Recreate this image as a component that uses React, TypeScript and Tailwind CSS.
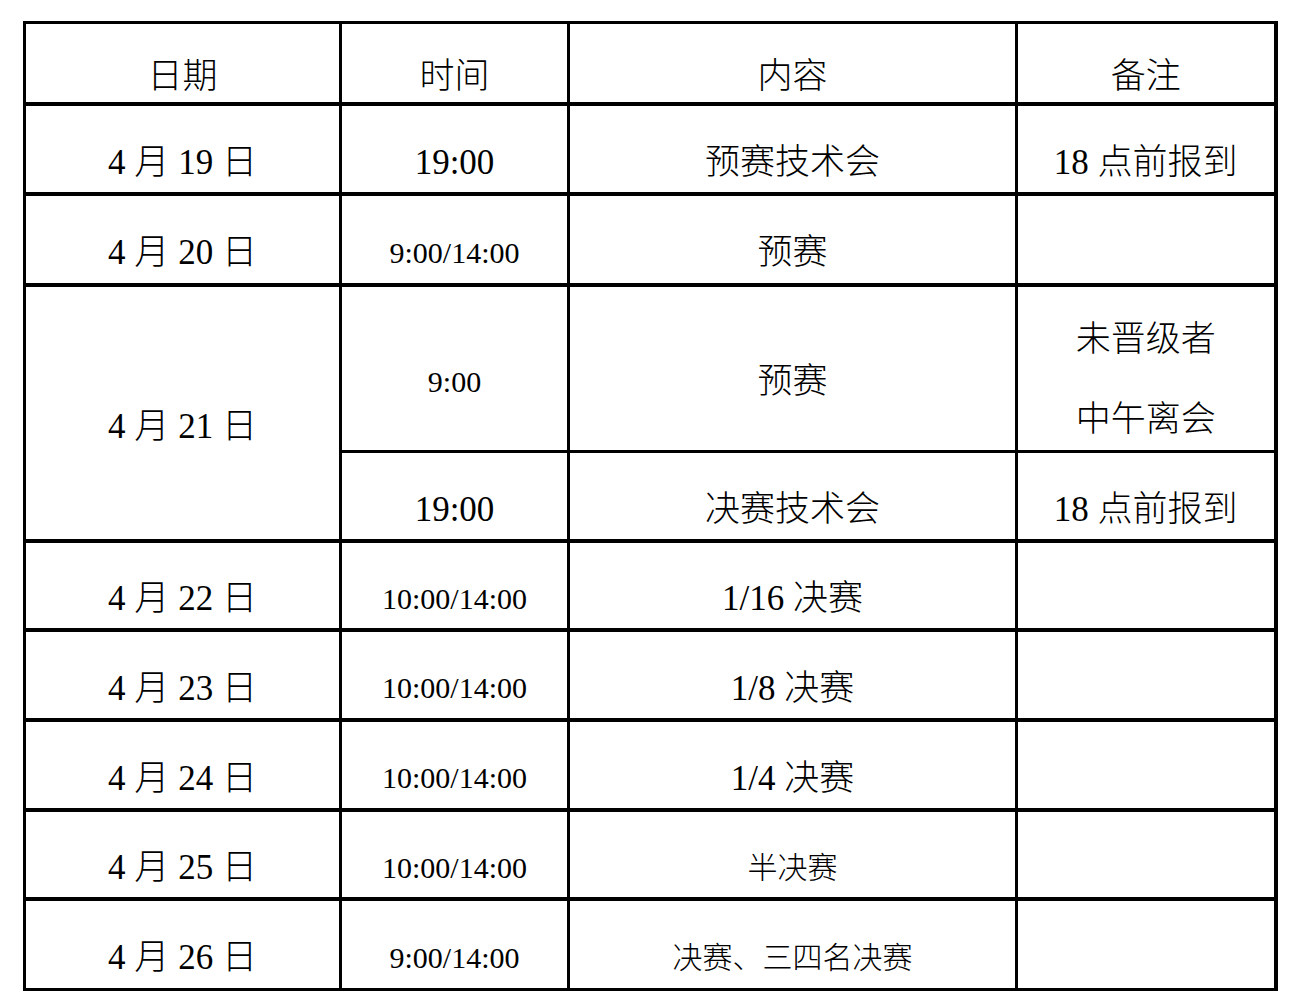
const font = "font-['Liberation_Serif','Noto_Sans_CJK_SC',serif]";
const latin = "font-['Liberation_Serif',serif]";

// split text into latin / CJK runs so digits keep the serif face
function T({ s }: { s: string }) {
  const parts = s.match(/[\x00-\x7f]+|[^\x00-\x7f]+/g) || [];
  return (
    <>
      {parts.map((p, i) =>
        /^[\x00-\x7f]+$/.test(p) ? (
          <span key={i} className={latin}>
            {p}
          </span>
        ) : (
          <span key={i} className="font-light">
            {p}
          </span>
        )
      )}
    </>
  );
}

type Row = {
  date: string;
  time: string;
  content: string;
  contentSmall?: boolean;
  h: string;
};

const rows: Row[] = [
  { date: "4 月 22 日", time: "10:00/14:00", content: "1/16 决赛", h: "h-[89px]" },
  { date: "4 月 23 日", time: "10:00/14:00", content: "1/8 决赛", h: "h-[90px]" },
  { date: "4 月 24 日", time: "10:00/14:00", content: "1/4 决赛", h: "h-[90px]" },
  { date: "4 月 25 日", time: "10:00/14:00", content: "半决赛", contentSmall: true, h: "h-[89px]" },
  { date: "4 月 26 日", time: "9:00/14:00", content: "决赛、三四名决赛", contentSmall: true, h: "h-[91px]" },
];

const cell = "border-[3px] border-black text-center align-middle p-0 pt-[27px]";
const big = "text-[35px] leading-none";
const sm = "text-[30px] leading-none";

export default function App() {
  return (
    <div className={`min-h-[1000px] bg-white pl-[23px] pt-[21px] text-black ${font}`}>
      <table className="w-[1251px] table-fixed border-collapse border-[3px] border-r-4 border-black">
        <colgroup>
          <col className="w-[316px]" />
          <col className="w-[228px]" />
          <col className="w-[448px]" />
          <col className="w-[259px]" />
        </colgroup>
        <tbody>
          <tr className="h-[81px] border-b-4 border-black">
            <td className={`${cell} ${big}`}><T s="日期" /></td>
            <td className={`${cell} ${big}`}><T s="时间" /></td>
            <td className={`${cell} ${big}`}><T s="内容" /></td>
            <td className={`${cell} ${big}`}><T s="备注" /></td>
          </tr>
          <tr className="h-[90px] border-b-4 border-black">
            <td className={`${cell} ${big}`}><T s="4 月 19 日" /></td>
            <td className={`${cell} ${big}`}><T s="19:00" /></td>
            <td className={`${cell} ${big}`}><T s="预赛技术会" /></td>
            <td className={`${cell} ${big}`}><T s="18 点前报到" /></td>
          </tr>
          <tr className="h-[91px] border-b-4 border-black">
            <td className={`${cell} ${big}`}><T s="4 月 20 日" /></td>
            <td className={`${cell} ${sm}`}><T s="9:00/14:00" /></td>
            <td className={`${cell} ${big}`}><T s="预赛" /></td>
            <td className={cell}></td>
          </tr>
          <tr className="h-[167px]">
            <td rowSpan={2} className={`${cell} ${big} border-b-4`}><T s="4 月 21 日" /></td>
            <td className={`${cell} ${sm}`}><T s="9:00" /></td>
            <td className={`${cell} ${big}`}><T s="预赛" /></td>
            <td className="border-[3px] border-black p-0 text-center align-middle text-[35px]">
              <div className="translate-y-[12px] leading-[80px]">
                <T s="未晋级者" />
                <br />
                <T s="中午离会" />
              </div>
            </td>
          </tr>
          <tr className="h-[89px] border-b-4 border-black">
            <td className={`${cell} ${big}`}><T s="19:00" /></td>
            <td className={`${cell} ${big}`}><T s="决赛技术会" /></td>
            <td className={`${cell} ${big}`}><T s="18 点前报到" /></td>
          </tr>
          {rows.map((r, i) => (
            <tr key={i} className={`${r.h} ${i < rows.length - 1 ? "border-b-4" : ""} border-black`}>
              <td className={`${cell} ${big}`}><T s={r.date} /></td>
              <td className={`${cell} ${sm}`}><T s={r.time} /></td>
              <td className={`${cell} ${r.contentSmall ? sm : big}`}><T s={r.content} /></td>
              <td className={cell}></td>
            </tr>
          ))}
        </tbody>
      </table>
    </div>
  );
}
